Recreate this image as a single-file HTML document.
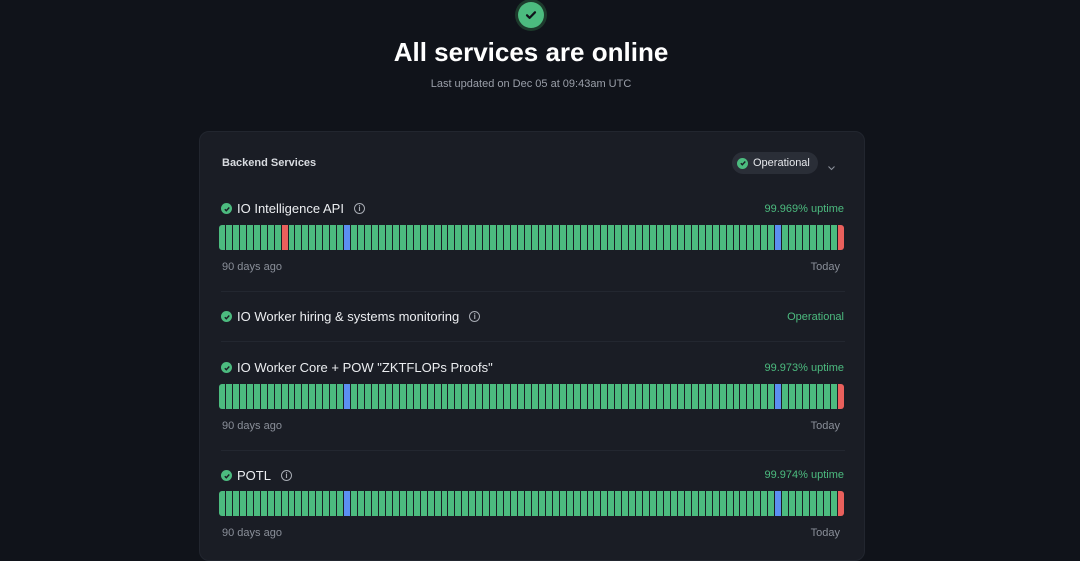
<!DOCTYPE html>
<html><head><meta charset="utf-8"><style>
*{margin:0;padding:0;box-sizing:border-box}
body{width:1080px;height:545px;overflow:hidden;background:#10131a;font-family:"Liberation Sans",sans-serif;color:#e8eaee;position:relative}
.top{position:absolute;left:515px;top:-1px;width:32px;height:32px;border-radius:50%;background:#1d3a2c;display:flex;align-items:center;justify-content:center}
.top div{width:26px;height:26px;border-radius:50%;background:#4cbb7f;display:flex;align-items:center;justify-content:center}
h1{position:absolute;top:37px;left:0;width:1062px;text-align:center;font-size:26px;font-weight:bold;color:#fff}
.sub{position:absolute;top:78px;left:0;width:1062px;text-align:center;font-size:11px;color:#9a9fa9}
.card{position:absolute;left:199px;top:131px;width:666px;height:430px;background:#1a1d25;border-radius:10px;border:1px solid #22262f}
.abs{position:absolute}
.hdr{left:22px;top:25px;font-size:11px;font-weight:bold;color:#d8dbe0}
.pill{left:532px;top:20px;height:22px;width:86px;border-radius:11px;background:#2a2e37;font-size:11px;color:#e6e8ec;display:flex;align-items:center;padding-left:5px;gap:5px}
.chev{left:627px;top:27px}
.dot{width:11px;height:11px;border-radius:50%;background:#4cbb7f;display:inline-flex;align-items:center;justify-content:center}
.name{left:21px;font-size:13px;color:#eceef1;display:flex;align-items:center;gap:5px}
.info{width:11px;height:11px;border:1px solid #a7abb3;border-radius:50%;font-size:8px;color:#a7abb3;display:inline-flex;align-items:center;justify-content:center;margin-left:5px;font-weight:bold}
.up{right:20px;font-size:11px;color:#4cbb7f}
.bars{left:19px;width:625px;height:25px;display:flex;gap:1px}
.bars i{flex:1;background:#4cbb7f;display:block}
.bars i:first-child{border-radius:3px 0 0 3px}
.bars i:last-child{border-radius:0 3px 3px 0}
.lbl{font-size:11px;color:#8a8f99}
.sep{left:21px;width:624px;height:1px;background:#232730}
</style></head><body>
<div class="top"><div><svg width="14" height="14" viewBox="0 0 14 14"><path d="M3 7.3l2.6 2.6L11 4.3" stroke="#10131a" stroke-width="2.2" fill="none" stroke-linecap="round" stroke-linejoin="round"/></svg></div></div>
<h1>All services are online</h1>
<div class="sub">Last updated on Dec 05 at 09:43am UTC</div>
<div class="card">
<div class="abs hdr">Backend Services</div>
<div class="abs pill"><span class="dot"><svg width="8" height="8" viewBox="0 0 8 8"><path d="M1.8 4.2l1.5 1.5 3-3.2" stroke="#1a1d25" stroke-width="1.4" fill="none"/></svg></span>Operational</div>
<div class="abs chev"><svg width="9" height="8" viewBox="0 0 9 8"><path d="M1.5 2.5l3 3 3-3" stroke="#8a8f99" stroke-width="1.1" fill="none"/></svg></div>

<div class="abs name" style="top:69px"><span class="dot"></span>IO Intelligence API<span class="info">i</span></div>
<div class="abs up" style="top:71px">99.969% uptime</div>
<div class="abs bars" id="b1" style="top:93px"></div>
<div class="abs lbl" style="left:22px;top:129px">90 days ago</div>
<div class="abs lbl" style="right:24px;top:129px">Today</div>
<div class="abs sep" style="top:159px"></div>

<div class="abs name" style="top:177px"><span class="dot"></span>IO Worker hiring &amp; systems monitoring<span class="info">i</span></div>
<div class="abs up" style="top:179px">Operational</div>
<div class="abs sep" style="top:209px"></div>

<div class="abs name" style="top:228px"><span class="dot"></span>IO Worker Core + POW "ZKTFLOPs Proofs"</div>
<div class="abs up" style="top:230px">99.973% uptime</div>
<div class="abs bars" id="b2" style="top:252px"></div>
<div class="abs lbl" style="left:22px;top:288px">90 days ago</div>
<div class="abs lbl" style="right:24px;top:288px">Today</div>
<div class="abs sep" style="top:318px"></div>

<div class="abs name" style="top:336px"><span class="dot"></span>POTL<span class="info">i</span></div>
<div class="abs up" style="top:337px">99.974% uptime</div>
<div class="abs bars" id="b3" style="top:359px"></div>
<div class="abs lbl" style="left:22px;top:395px">90 days ago</div>
<div class="abs lbl" style="right:24px;top:395px">Today</div>
</div>
<script>
function fill(id,red){var h='';for(var i=0;i<90;i++){var c='';if(i==18||i==80)c='#5b8ff2';if(i==89||(red&&i==9))c='#e9605c';h+='<i'+(c?' style="background:'+c+'"':'')+'></i>';}document.getElementById(id).innerHTML=h;}
fill('b1',1);fill('b2',0);fill('b3',0);
document.querySelectorAll('.name .dot').forEach(function(d){d.innerHTML='<svg width="8" height="8" viewBox="0 0 8 8"><path d="M1.8 4.2l1.5 1.5 3-3.2" stroke="#1a1d25" stroke-width="1.4" fill="none"/></svg>';});
</script>
</body></html>
